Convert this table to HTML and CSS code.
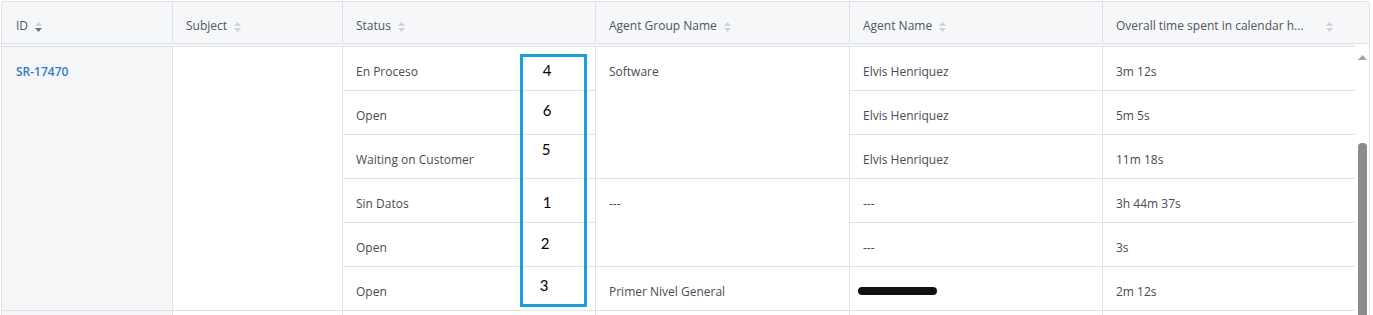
FILE: index.html
```html
<!DOCTYPE html>
<html>
<head>
<meta charset="utf-8">
<link rel="stylesheet" href="styles.css">
</head>
<body>
<div class="table">
  <div class="head">
    <div class="th first"><span class="label">ID</span><svg class="sort active" width="7" height="10" viewBox="0 0 7 10"><path class="up" d="M3.5 0L7 4H0Z"/><path class="down" d="M0 6H7L3.5 10Z"/></svg></div>
    <div class="th"><span class="label">Subject</span><svg class="sort" width="7" height="10" viewBox="0 0 7 10"><path class="up" d="M3.5 0L7 4H0Z"/><path class="down" d="M0 6H7L3.5 10Z"/></svg></div>
    <div class="th"><span class="label">Status</span><svg class="sort" width="7" height="10" viewBox="0 0 7 10"><path class="up" d="M3.5 0L7 4H0Z"/><path class="down" d="M0 6H7L3.5 10Z"/></svg></div>
    <div class="th"><span class="label">Agent Group Name</span><svg class="sort" width="7" height="10" viewBox="0 0 7 10"><path class="up" d="M3.5 0L7 4H0Z"/><path class="down" d="M0 6H7L3.5 10Z"/></svg></div>
    <div class="th"><span class="label">Agent Name</span><svg class="sort" width="7" height="10" viewBox="0 0 7 10"><path class="up" d="M3.5 0L7 4H0Z"/><path class="down" d="M0 6H7L3.5 10Z"/></svg></div>
    <div class="th last"><span class="label trunc">Overall time spent in calendar h...</span><svg class="sort" width="7" height="10" viewBox="0 0 7 10"><path class="up" d="M3.5 0L7 4H0Z"/><path class="down" d="M0 6H7L3.5 10Z"/></svg></div>
  </div>
  <div class="body">
    <div class="grid">
      <div class="td c1 span6 idcell"><a class="link">SR-17470</a></div>
      <div class="td c2 span6"></div>
      <div class="td c3">En Proceso</div>
      <div class="td c4 span3">Software</div>
      <div class="td c5">Elvis Henriquez</div>
      <div class="td c6">3m 12s</div>

      <div class="td c3">Open</div>
      <div class="td c5">Elvis Henriquez</div>
      <div class="td c6">5m 5s</div>

      <div class="td c3">Waiting on Customer</div>
      <div class="td c5">Elvis Henriquez</div>
      <div class="td c6">11m 18s</div>

      <div class="td c3">Sin Datos</div>
      <div class="td c4 span2">---</div>
      <div class="td c5">---</div>
      <div class="td c6">3h 44m 37s</div>

      <div class="td c3">Open</div>
      <div class="td c5">---</div>
      <div class="td c6">3s</div>

      <div class="td c3">Open</div>
      <div class="td c4">Primer Nivel General</div>
      <div class="td c5"><span class="redact"></span></div>
      <div class="td c6">2m 12s</div>

      <div class="td c1 idcell"></div>
      <div class="td c2"></div>
      <div class="td c3"></div>
      <div class="td c4"></div>
      <div class="td c5"></div>
      <div class="td c6"></div>
    </div>
    <div class="scrollbar">
      <svg class="arrow" width="9" height="5" viewBox="0 0 9 5"><path d="M4.5 0L9 5H0Z"/></svg>
      <div class="thumb"></div>
    </div>
  </div>
  <div class="annot">
    <span class="num n4">4</span>
    <span class="num n6">6</span>
    <span class="num n5">5</span>
    <span class="num n1">1</span>
    <span class="num n2">2</span>
    <span class="num n3">3</span>
  </div>
</div>
</body>
</html>
```

FILE: styles.css
```css
html, body {
  margin: 0;
  padding: 0;
  background: #ffffff;
  overflow: hidden;
  height: 315px;
}
body {
  font-family: "Open Sans", "Noto Sans", sans-serif;
  font-size: 12px;
  line-height: 16px;
  color: #474d54;
}
.table {
  position: relative;
  margin: 1px 0 0 1px;
  width: 1367px;
  border: 1px solid #dfe2e6;
  border-bottom: none;
  border-radius: 4px 4px 0 0;
  height: 313px;
  overflow: hidden;
}
.head {
  display: grid;
  grid-template-columns: 171px 170px 253px 254px 253px 266px;
  background: #f5f7f9;
  border-bottom: 1px solid #dfe2e6;
  border-radius: 4px 4px 0 0;
}
.th {
  box-sizing: border-box;
  height: 41px;
  padding: 16px 14px 0 13px;
  border-right: 1px solid #dfe2e6;
  display: flex;
  align-items: flex-start;
  gap: 7px;
  color: #4f5660;
  white-space: nowrap;
}
.th.first { padding-left: 14px; }
.th.last {
  border-right: none;
  padding-right: 36px;
  justify-content: space-between;
}
.sort {
  margin-top: 4px;
  flex: none;
}
.sort path { fill: #cfd3d8; }
.sort.active .down { fill: #6b7078; }
.sort.active .up { fill: #cfd3d8; }
.body {
  display: flex;
  background: #f5f7f9;
}
.grid {
  margin-top: 2px;
  border-top: 1px solid #dfe2e6;
  display: grid;
  grid-template-columns: 171px 170px 253px 254px 253px 252px;
  grid-auto-rows: 44px;
  background: #ffffff;
}
.td {
  box-sizing: border-box;
  background: #ffffff;
  border-right: 1px solid #dfe2e6;
  border-bottom: 1px solid #dfe2e6;
  padding: 17px 14px 0 13px;
  white-space: nowrap;
}
.c1 { grid-column: 1; padding-left: 14px; }
.c2 { grid-column: 2; }
.c3 { grid-column: 3; }
.c4 { grid-column: 4; }
.c5 { grid-column: 5; }
.c6 { grid-column: 6; border-right: none; }
.span2 { grid-row: span 2; }
.span3 { grid-row: span 3; }
.span6 { grid-row: span 6; }
.idcell { background: #f5f6f8; }
.link {
  color: #3b78c4;
  font-weight: 600;
  text-decoration: none;
}
.redact {
  display: block;
  width: 79px;
  height: 8px;
  margin: 3px 0 0 -5px;
  border-radius: 4px;
  background: #111111;
}
.scrollbar {
  width: 14px;
  background: #ffffff;
  display: flex;
  flex-direction: column;
}
.arrow {
  margin: 11px 0 0 3px;
  flex: none;
}
.arrow path { fill: #a3a3a3; }
.thumb {
  margin: 83px 0 0 3px;
  width: 9px;
  flex: 1;
  background: #8c8c8c;
  border-radius: 4px 4px 0 0;
}
.annot {
  position: absolute;
  left: 518px;
  top: 52px;
  width: 61px;
  height: 247px;
  border: 3px solid #1a9fdb;
}
.num {
  position: absolute;
  width: 20px;
  text-align: center;
  font-family: Lato, "Liberation Sans", sans-serif;
  font-size: 15px;
  line-height: 16px;
  color: #000000;
}
.n4 { left: 14px; top: 5px; }
.n6 { left: 14px; top: 45px; }
.n5 { left: 13px; top: 84px; }
.n1 { left: 14px; top: 137px; }
.n2 { left: 12px; top: 178px; }
.n3 { left: 11px; top: 220px; }
```
